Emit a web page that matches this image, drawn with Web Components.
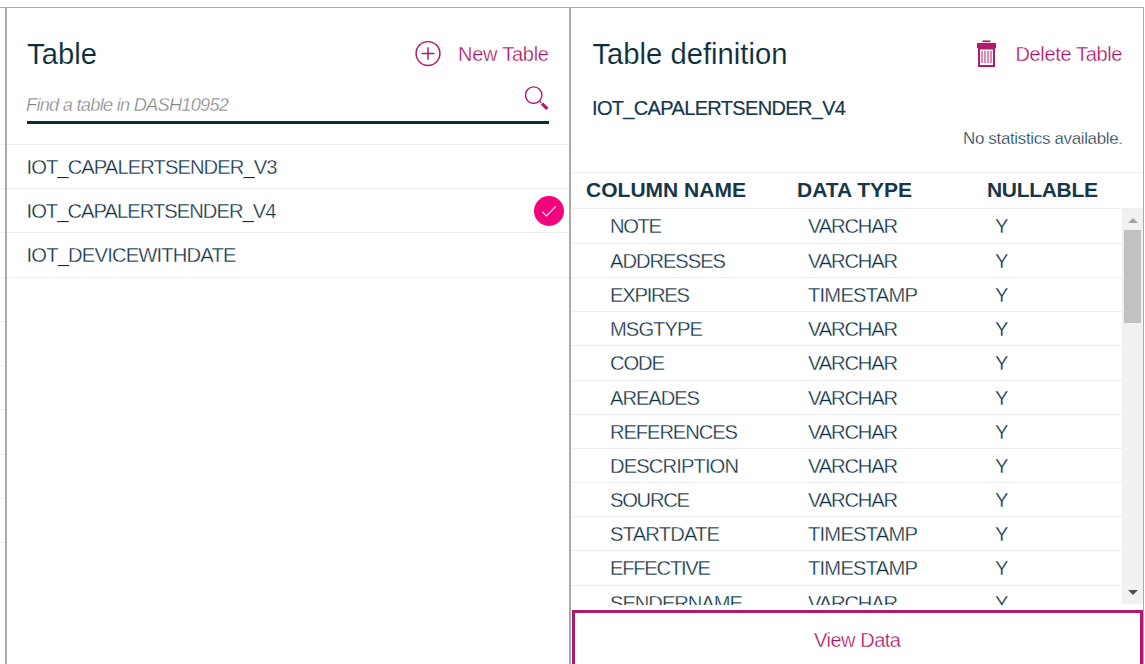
<!DOCTYPE html>
<html lang="en">
<head>
<meta charset="utf-8">
<title>Tables</title>
<style>
html,body{margin:0;height:100%;overflow:hidden;background:#fff}
body{font-family:"Liberation Sans",Arial,sans-serif;color:#0b2d40}
</style>
</head>
<body>
<table-browser></table-browser>
<script>
const define = (name, html, setup) => customElements.define(name, class extends HTMLElement {
  connectedCallback() {
    if (this.shadowRoot) return;
    this.attachShadow({mode: 'open'}).innerHTML = html;
    if (setup) setup(this, this.shadowRoot);
  }
});

/* Single-line label whose tracking is adjusted to fill the given width. */
define('fit-label', `<style>
:host{display:block;white-space:pre;flex:none;line-height:1.2;-webkit-text-stroke:.33px #fff}
:host([weight=book]){-webkit-text-stroke:.15px #fff}
:host([weight=medium]){-webkit-text-stroke:.3px currentColor}
:host([weight=bold]){font-weight:700;-webkit-text-stroke:0}
span{display:inline-block}
</style><span><slot></slot></span>`, (el, root) => {
  const w = +el.getAttribute('w'), span = root.querySelector('span');
  const n = el.textContent.length, natural = span.getBoundingClientRect().width;
  el.style.width = w + 'px';
  if (n > 1) span.style.letterSpacing = ((w - natural) / (n - 1)) + 'px';
});

define('previous-panel', `<style>
:host{display:grid;grid-template-rows:44px 44px 45px 44px 44px 44px 45px 44px 44px;align-content:start;padding-top:136px;width:4px;margin-right:1px}
i{border-top:1px solid #ededed}
</style>${'<i></i>'.repeat(10)}`);

define('search-field', `<style>
:host{display:flex;height:40px;margin:0 20px 0 20px;border-bottom:3px solid #0b2d38;font-style:italic;font-size:18.2px;color:#838383;justify-content:space-between;box-sizing:border-box}
fit-label{margin:11px 0 0 -1px}
svg{display:block;margin-top:2px}
</style><fit-label w="203">Find a table in DASH10952</fit-label>
<svg width="24" height="24" viewBox="0 0 24 24" fill="none" stroke="#b4186b"><circle cx="8.7" cy="9.1" r="8.2" stroke-width="1.4"/><path d="M14.6 15.2l1.8 1.8" stroke-width="1.2"/><path d="M17 17.6l5.3 5.3" stroke-width="3.2"/></svg>`);

define('table-item', `<style>
:host{display:flex;align-items:center;justify-content:space-between;height:43px;border-bottom:1px solid #ededed;padding:0 5px 0 19.5px;font-size:20.2px}
::slotted(*){margin-top:1px}
svg{display:none}
:host([selected]) svg{display:block}
</style><slot></slot><svg width="30" height="30" viewBox="0 0 30 30"><circle cx="15" cy="15" r="15" fill="#f5007d"/><path d="M8.2 15.7l4.3 4.2L22 10.2" fill="none" stroke="#fff" stroke-width="1.1"/></svg>`);

define('table-panel', `<style>
:host{display:flex;flex-direction:column;width:562px;border:solid #a9a9a9;border-width:0 2px;flex:none}
header{display:flex;height:76px;align-items:flex-start;padding:0 20px 0 20px;color:#0b2d38}
h2{margin:29px auto 0 0;font:29.2px "Liberation Sans"}
svg{margin:33px 17px 0 0}
.action{margin-top:34px;font-size:20px;color:#ab0a60}
.list{margin-top:20px;border-top:1px solid #ededed}
.list table-item:last-child{height:44px}
.list table-item:last-child fit-label{margin-top:0}
</style>
<header><h2><fit-label weight="book" w="70">Table</fit-label></h2>
<svg width="26" height="26" viewBox="0 0 26 26" fill="none" stroke="#b4186b" stroke-width="1.5"><circle cx="13" cy="12.5" r="11.9"/><path d="M6.7 12.5h12.6M13 6.2v12.6"/></svg>
<fit-label class="action" w="91">New Table</fit-label></header>
<search-field></search-field>
<div class="list">
<table-item><fit-label w="251">IOT_CAPALERTSENDER_V3</fit-label></table-item>
<table-item selected><fit-label w="250">IOT_CAPALERTSENDER_V4</fit-label></table-item>
<table-item><fit-label w="210">IOT_DEVICEWITHDATE</fit-label></table-item>
</div>`);

define('column-row', `<style>
:host{display:grid;grid-template-columns:198px 187px auto;align-items:center;height:33.19px;padding-left:38px;border-bottom:1px solid #ededed;font-size:20.2px}
:host(:first-child){height:33.8px}
::slotted(*){margin-top:1px}
</style><slot></slot>`);

define('scroll-bar', `<style>
:host{display:flex;flex-direction:column;width:21px;background:#f1f1f1;align-items:center}
i{width:17px;height:93px;background:#c1c1c1;margin:5px 0 auto}
svg{display:block;margin-top:9px}
svg:last-child{margin:0 0 8px}
</style><svg width="10" height="7"><path d="M0 5L5 0l5 5z" fill="#a3a3a3"/></svg><i></i><svg width="10" height="7"><path d="M0 1h10L5 6z" fill="#505050"/></svg>`);

const columns = [['NOTE',52],['ADDRESSES',116],['EXPIRES',80],['MSGTYPE',93],['CODE',55],['AREADES',90],['REFERENCES',128],['DESCRIPTION',129],['SOURCE',80],['STARTDATE',110,1],['EFFECTIVE',101,1],['SENDERNAME',133]];
columns[2][2] = 1;
const rows = columns.map(([n, w, t]) => `<column-row><fit-label w="${w}">${n}</fit-label><fit-label w="${t ? 110 : 90}">${t ? 'TIMESTAMP' : 'VARCHAR'}</fit-label><fit-label w="13">Y</fit-label></column-row>`).join('');

define('definition-panel', `<style>
:host{display:flex;flex-direction:column;flex:1;min-width:0;border-right:1px solid #a9a9a9;padding-left:1px}
header{display:flex;height:76px;align-items:flex-start;padding:0 20.5px 0 20.5px;color:#0b2d38}
h2{margin:29px auto 0 0;font:29.2px "Liberation Sans"}
svg.trash{margin:32px 20px 0 0}
.action{margin-top:34px;font-size:20px;color:#ab0a60}
.name{margin:12px 0 0 20px;font-size:20px;height:25px;-webkit-text-stroke-width:.2px;color:#173748}
.stats{margin:8px 20px 0 auto;font-size:16.9px;height:43px}
.head{display:grid;grid-template-columns:211px 190px auto;height:35px;border:solid #ededed;border-width:1px 0;padding-left:14px;align-items:center;font-size:21px;color:#173748}
.head fit-label{margin-top:-1px}
.body{display:flex;height:396px;overflow:hidden}
.rows{flex:1;height:396px;overflow:hidden}
scroll-bar{height:395px}
.view{margin-top:5px;border:3px solid #b4186b;border-bottom:0;flex:1;display:flex;justify-content:center;color:#ab0a60;font-size:20px}
.view fit-label{margin-top:15px}
</style>
<header><h2><fit-label weight="book" w="195">Table definition</fit-label></h2>
<svg class="trash" width="19" height="28" viewBox="0 0 19 28"><path d="M5.5 1.3h8" stroke="#b4186b" stroke-width="1.7"/><path d="M0 3h19v5h-1v19H1V8H0z" fill="#b4186b"/><path d="M3 9.5h13V25H3z" fill="#fff"/><path d="M5 11v12M8 11v12M11 11v12M14 11v12" stroke="#b4186b" stroke-width="1"/></svg>
<fit-label class="action" w="107">Delete Table</fit-label></header>
<fit-label class="name" weight="medium" w="254">IOT_CAPALERTSENDER_V4</fit-label>
<fit-label class="stats" w="160">No statistics available.</fit-label>
<div class="head"><fit-label weight="bold" w="160">COLUMN NAME</fit-label><fit-label weight="bold" w="115">DATA TYPE</fit-label><fit-label weight="bold" w="111">NULLABLE</fit-label></div>
<div class="body"><div class="rows">${rows}</div><scroll-bar></scroll-bar></div>
<div class="view"><fit-label w="87">View Data</fit-label></div>`);

define('table-browser', `<style>
:host{display:flex;box-sizing:border-box;height:664px;width:1144px;padding-top:7px;overflow:hidden}
.frame{display:flex;flex:1;border-top:1px solid #a9a9a9;min-width:0}
</style><div class="frame"><previous-panel></previous-panel><table-panel></table-panel><definition-panel></definition-panel></div>`);
</script>
</body>
</html>
